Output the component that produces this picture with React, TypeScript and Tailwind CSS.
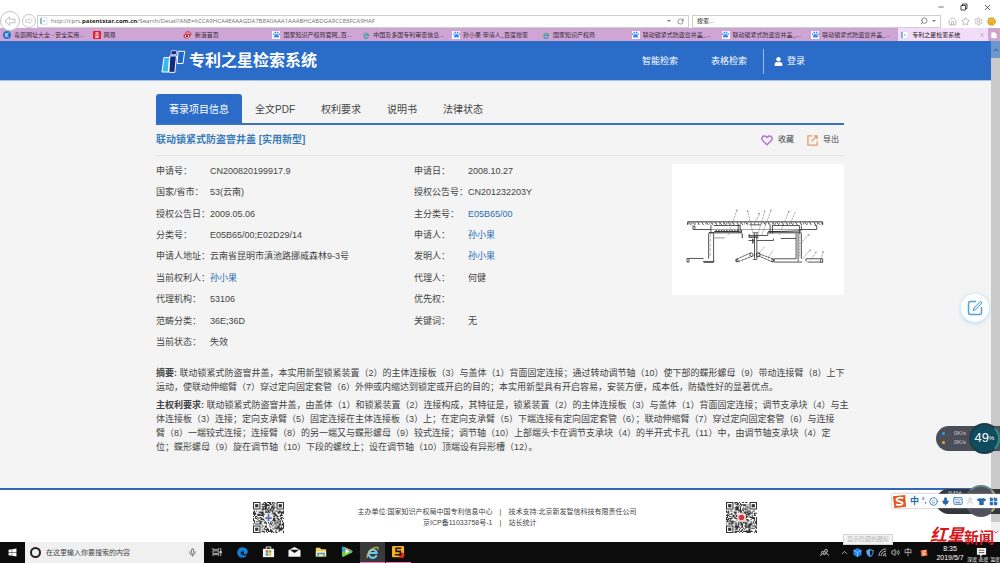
import type { ReactNode } from "react";
import {
  ChevronDown,
  ChevronUp,
  Home,
  Keyboard,
  LayoutGrid,
  Mic,
  Minus,
  RotateCw,
  Search,
  Settings,
  Smile,
  Star,
  User,
  Volume2,
  X,
} from "lucide-react";
import { FaEdge, FaPaw, FaShieldAlt, FaTshirt, FaUser, FaWindows } from "react-icons/fa";

const browserTabs = [
  { icon: "k", title: "毒霸网址大全 - 安全实用..." },
  { icon: "netease", title: "网易" },
  { icon: "sina", title: "新浪首页" },
  { icon: "baidu", title: "国家知识产权局官网_百..." },
  { icon: "ie", title: "中国及多国专利审查信息..." },
  { icon: "baidu", title: "孙小果 申请人_百度搜索" },
  { icon: "ie", title: "国家知识产权局" },
  { icon: "baidu", title: "联动锁紧式防盗窨井盖_..." },
  { icon: "baidu", title: "联动锁紧式防盗窨井盖_..." },
  { icon: "baidu", title: "联动锁紧式防盗窨井盖_..." },
];

const detailTabs = ["著录项目信息", "全文PDF", "权利要求", "说明书", "法律状态"];

interface Field {
  label: string;
  value: string;
  link?: boolean;
}

const leftFields: Field[] = [
  { label: "申请号：", value: "CN200820199917.9" },
  { label: "国家/省市：", value: "53(云南)" },
  { label: "授权公告日：", value: "2009.05.06" },
  { label: "分类号：", value: "E05B65/00;E02D29/14" },
  { label: "申请人地址：", value: "云南省昆明市滇池路挪威森林9-3号" },
  { label: "当前权利人：", value: "孙小果", link: true },
  { label: "代理机构：", value: "53106" },
  { label: "范畴分类：", value: "36E;36D" },
  { label: "当前状态：", value: "失效" },
];

const rightFields: Field[] = [
  { label: "申请日：", value: "2008.10.27" },
  { label: "授权公告号：", value: "CN201232203Y" },
  { label: "主分类号：", value: "E05B65/00", link: true },
  { label: "申请人：", value: "孙小果", link: true },
  { label: "发明人：", value: "孙小果", link: true },
  { label: "代理人：", value: "何健" },
  { label: "优先权：", value: "" },
  { label: "关键词：", value: "无" },
];

function IeIcon({ className, color }: { className: string; color: string }) {
  return (
    <svg viewBox="0 0 16 16" className={className} fill="none">
      <path d="M13 11.2A5 5 0 1 1 13.200 8.600H4.500" stroke={color} strokeWidth="2.600" />
      <path d="M2 14.500C0 13 3 7 8 3.500c3.500-2.300 6.500-2.600 6.800-1 .1.600-.1 1.300-.5 2" stroke="#e9bd3c" strokeWidth="1.400" />
    </svg>
  );
}

function TabIcon({ name }: { name: string }) {
  if (name === "baidu") {
    return (
      <span className="flex size-2 shrink-0 items-center justify-center bg-white text-[#3388ff]">
        <FaPaw size={7} />
      </span>
    );
  }
  if (name === "ie") return <IeIcon className="size-2 shrink-0" color="#3f9ac4" />;
  if (name === "sina") {
    return (
      <svg viewBox="0 0 18 16" className="w-[9px] shrink-0">
        <path d="M1 10c0-3 5-6 8-4 4-1 7 1 6 4-1 3-4 5-8 5s-6-2-6-5z" fill="#d9201f" />
        <ellipse cx="8" cy="10.500" rx="4.500" ry="3" fill="#fff" />
        <circle cx="8" cy="10.500" r="2.200" fill="#111" />
        <path d="M4 4q4-4 9-2 3 1.500 3.500 5" fill="none" stroke="#d9201f" strokeWidth="1.800" />
      </svg>
    );
  }
  if (name === "netease") {
    return (
      <svg viewBox="0 0 8 8" className="size-2 shrink-0">
        <rect width="8" height="8" rx="1" fill="#dd1f2d" />
        <path d="M2 2h4M4 1v3M1.5 4h5M2.5 6.5h3v-1h-3z" stroke="#fff" strokeWidth="0.7" fill="none" />
      </svg>
    );
  }
  return (
    <svg viewBox="0 0 8 8" className="size-2 shrink-0">
      <circle cx="4" cy="4" r="4" fill="#1f74d2" />
      <path d="M3 2v4M5.5 2L3.2 4l2.3 2" stroke="#fff" strokeWidth="0.9" fill="none" />
    </svg>
  );
}

function PageIcon() {
  return (
    <svg viewBox="0 0 8 8" className="size-2 shrink-0">
      <path d="M1 0.5h6v7H1z" fill="#fff" stroke="#c9d6e4" strokeWidth="0.6" />
      <path d="M1 1v6" stroke="#4a90c8" strokeWidth="1.2" />
      <path d="M3 4h2" stroke="#6fb48d" strokeWidth="1" />
    </svg>
  );
}

function NavArrow({ size, flip }: { size: string; flip?: boolean }) {
  return (
    <button
      type="button"
      aria-label={flip ? "前进" : "后退"}
      className={`${size} flex shrink-0 items-center justify-center rounded-full border border-[#c4c4c4] bg-white`}
    >
      <svg viewBox="0 0 12 12" className={flip ? "w-2 rotate-180" : "w-3"}>
        <path d="M1 6l4.5-4.2v2.4H11v3.6H5.5v2.4z" fill="#fff" stroke="#b5b5b5" strokeWidth="0.9" />
      </svg>
    </button>
  );
}

function BrowserChrome() {
  return (
    <header className="bg-white">
      <div className="flex h-[14px] items-center justify-end gap-[15px] pr-[8px] text-[#333]">
        <button type="button" aria-label="最小化"><Minus size={8} /></button>
        <button type="button" aria-label="还原">
          <svg viewBox="0 0 8 8" className="size-2">
            <path d="M1 2.5h4.5V7H1zM2.5 2.5V1H7v4.5H5.5" fill="none" stroke="#333" strokeWidth="0.9" />
          </svg>
        </button>
        <button type="button" aria-label="关闭"><X size={9} /></button>
      </div>
      <div className="flex h-[14px] items-center pr-1">
        <NavArrow size="size-5" />
        <NavArrow size="ml-0.5 size-[14px]" flip />
        <div className="ml-px flex h-[13px] flex-1 items-center border border-[#cfcfcf] pl-0.5 pr-1">
          <PageIcon />
          <div role="textbox" aria-label="地址" className="ml-[3px] flex-1 whitespace-nowrap font-['Open_Sans','Noto_Sans',sans-serif] text-[6px] leading-[10px] text-[#707070]">
            http://cprs.<b className="text-[#222]">patentstar.com.cn</b>/Search/Detail?ANE=6CCA9HCA4EAAAGDA7BEA0AAA1AAABHCABDGA9CCE8FCA9HAF
          </div>
          <span className="border-x-2 border-t-2 border-x-transparent border-t-[#777]" />
          <button type="button" aria-label="刷新" className="ml-1.5 text-[#555]"><RotateCw size={7} /></button>
        </div>
        <label className="ml-[3px] flex h-[13px] w-[249px] items-center border border-[#cfcfcf] px-1">
          <input aria-label="搜索" defaultValue="搜索..." className="min-w-0 flex-1 text-[6px] leading-[10px] text-[#222] outline-none" />
          <Search size={8} className="-scale-x-100 text-[#555]" />
          <span className="ml-1 border-x-2 border-t-2 border-x-transparent border-t-[#777]" />
        </label>
        <div className="ml-[7px] flex items-center gap-[4px] text-[#a8a8a8]">
          <Home size={9} />
          <Star size={9} />
          <Settings size={9} />
          <Smile size={9} fill="#f3c02c" className="text-[#b98b1c]" />
        </div>
      </div>
      <nav className="flex h-[13px] items-stretch bg-[#cfa5d5] text-[6px] leading-[12px] text-[#3a2a3e]">
        {browserTabs.map((tab, i) => (
          <a key={i} href="#" className="flex min-w-0 flex-1 items-center gap-[3px] overflow-hidden whitespace-nowrap pl-[3px]">
            <TabIcon name={tab.icon} />
            {tab.title}
          </a>
        ))}
        <a href="#" className="flex min-w-0 flex-1 items-center gap-[3px] whitespace-nowrap bg-[#f3dcf7] pl-[3px] text-[#1f1722]">
          <PageIcon />
          专利之星检索系统
          <X size={6} className="ml-auto mr-[3px] text-[#a77fae]" />
        </a>
        <button type="button" aria-label="新标签" className="flex w-[12px] items-center justify-center">
          <svg viewBox="0 0 8 8" className="size-2">
            <path d="M1 1h4l2 2v4.5H1z" fill="#fff" stroke="#b9a9bd" strokeWidth="0.6" />
            <path d="M5 0.5h2.5V3z" fill="#e8a13a" />
          </svg>
        </button>
      </nav>
    </header>
  );
}

function Logo() {
  return (
    <svg viewBox="484 146 76 76" className="size-[25px]">
      <path d="M493 172h17l-4 44h-19z" fill="#35b9ef" stroke="#fff" strokeWidth="3" />
      <path d="M511 167h20l-5 50h-18z" fill="#152a7c" stroke="#fff" strokeWidth="3" />
      <path d="M516 151h16l-2 12h-16z" fill="#152a7c" stroke="#fff" strokeWidth="2" />
      <path d="M536 153h20l-5 37h-18z" fill="#1f67c7" stroke="#fff" strokeWidth="3" />
    </svg>
  );
}

function SiteHeader() {
  return (
    <div className="border-b border-[#a9c1e4] bg-[#2a6cc8] pl-[9px] text-white">
      <div className="mx-auto flex h-[39px] w-full max-w-[688px] items-center pt-px">
        <a href="#" className="flex items-center gap-[3px] pl-[5px] text-[16px] font-bold leading-[20px]">
          <Logo />
          专利之星检索系统
        </a>
        <nav className="ml-auto flex items-center pr-[39px] text-[9px] leading-[14px]">
          <a href="#">智能检索</a>
          <a href="#" className="ml-[33px] mr-4">表格检索</a>
          <a href="#" className="flex h-[25px] items-center gap-1 border-l border-[#9dbce8] pl-[10px]">
            <FaUser size={9} />
            登录
          </a>
        </nav>
      </div>
    </div>
  );
}

function FieldList({ fields }: { fields: Field[] }) {
  return (
    <dl className="grid min-h-[193px] auto-rows-fr grid-cols-[54px_1fr] grid-rows-9">
      {fields.map((field) => (
        <div key={field.label} className="col-span-2 grid grid-cols-subgrid items-center">
          <dt className="whitespace-nowrap">{field.label}</dt>
          <dd className="whitespace-nowrap">
            {field.link ? <a href="#" className="text-[#2b6db5]">{field.value}</a> : field.value}
          </dd>
        </div>
      ))}
    </dl>
  );
}

function PatentFigure() {
  return (
    <svg viewBox="36 221 515 394" className="h-[131px] w-[172px] bg-white" fill="none" stroke="#333" strokeWidth="2.5">
      <path d="M82 404v-9h406v9" strokeWidth="3" />
      <path d="M86 396l6 8M98 396l6 8M112 396l5 8M124 396l6 8M138 396l6 8M152 396l5 8M164 396l6 8M178 396l6 8M190 396l6 8M204 396l5 8M216 396l6 8M230 396l5 8M242 396l6 8M256 396l6 8M310 396l6 8M324 396l6 8M338 396l5 8M350 396l6 8M364 396l6 8M378 396l5 8M392 396l6 8M406 396l6 8M420 396l5 8M434 396l6 8M448 396l6 8M462 396l5 8M474 396l6 8" />
      <path d="M84 400h404" strokeWidth="6" stroke="#777" strokeDasharray="2 7 3 9" />
      <path d="M98 406v12h54M160 406h80M268 404h34M338 406h80M418 418h52v-12h-6M98 408h6v8" />
      <path d="M152 418h268" strokeWidth="2" stroke="#777" />
      <path d="M152 404v24M234 404v24M240 404v24M330 404v26M337 404v26M418 406v24M424 406v14" />
      <path d="M146 428h98v-8M162 424h76M246 430v14M324 428h100M324 424h40l60-2" strokeWidth="3" />
      <path d="M166 421h70" strokeDasharray="4 4" />
      <path d="M145 430v76M160 430v86M145 428h16M128 514h34M80 505h50M80 505v11h6v-10M160 517h-30" />
      <path d="M150 432v70" strokeWidth="1.5" strokeDasharray="10 4" stroke="#777" />
      <path d="M162 443h32" strokeWidth="4" stroke="#999" strokeDasharray="5 1" />
      <path d="M265 436h58v-10M267 432v8M265 451h18M290 451h50v-6M283 430v76M290 430v78M278 428h16M278 508h12" />
      <path d="M265 441h30M278 446v14" strokeWidth="4" />
      <path d="M272 488l-44 20 3 8 46-18M294 490l48 18-4 8-46-20" strokeDasharray="8 2" />
      <circle cx="274" cy="494" r="5" /><circle cx="294" cy="494" r="6" />
      <circle cx="230" cy="511" r="4" /><circle cx="339" cy="511" r="4" />
      <path d="M342 506h66M342 516h84M362 445h46M408 430v76M414 430v84M424 430v76" />
      <path d="M419 430v74" strokeDasharray="6 3" strokeWidth="1.5" />
      <path d="M438 506h50v11h-6v-10M438 506v8M442 516h40" />
      <g strokeWidth="1.5" stroke="#666" strokeDasharray="7 2">
        <path d="M230 360l-26 74M262 360l18 76M298 372l-14 24M314 362l-22 74M332 362l-28 76M386 364l-28 70M406 366l-16 34" />
        <path d="M314 470l-20 22M338 482l-14 20M446 434l-26 28M450 480l-22 26M468 486l-16 24M490 484l-6 20" />
      </g>
      <g strokeWidth="3" stroke="#888">
        <path d="M227 360h5M260 364h4M294 370h5M312 362h3M330 360h4M384 364h5M444 434h5M448 480h5M466 486h4M486 486h5" />
      </g>
    </svg>
  );
}

function Lines({ title, lines }: { title: string; lines: string[] }) {
  return (
    <p className="whitespace-nowrap">
      <b>{title}</b>
      {lines.map((line, i) => (
        <span key={line}>
          {i > 0 && <br />}
          {line}
        </span>
      ))}
    </p>
  );
}

function Detail() {
  return (
    <main className="flex-1 bg-[#f4f4f4] pl-[9px] pt-[13px] text-[9px] leading-[14px] text-[#444]">
      <div className="mx-auto w-full max-w-[688px]">
        <div role="tablist" className="flex border-b-2 border-[#3a72bd] text-[10px]">
          {detailTabs.map((tab, i) => (
            <button
              key={tab}
              type="button"
              role="tab"
              aria-selected={i === 0}
              className={
                i === 0
                  ? "h-[29px] rounded-t-[3px] bg-[#2a6cc8] px-[13px] pt-0.5 text-white"
                  : "h-[29px] px-[13px] pt-0.5"
              }
            >
              {tab}
            </button>
          ))}
        </div>
        <div className="flex h-[31px] items-center border-b border-[#e2e2e2]">
          <h1 className="text-[10px] font-bold text-[#3a7cb8]">联动锁紧式防盗窨井盖 [实用新型]</h1>
          <button type="button" className="ml-auto flex items-center gap-[5px] text-[8px]">
            <svg viewBox="0 0 12 11" className="w-3">
              <path d="M6 9.8L1.6 5.4a2.6 2.6 0 0 1 0-3.7 2.6 2.6 0 0 1 3.7 0L6 2.4l.7-.7a2.6 2.6 0 0 1 3.7 0 2.6 2.6 0 0 1 0 3.7z" fill="none" stroke="#b66fd6" strokeWidth="1.4" />
            </svg>
            收藏
          </button>
          <button type="button" className="ml-[13px] mr-[5px] flex items-center gap-[5px] text-[8px]">
            <svg viewBox="0 0 12 12" className="w-[11px]" fill="none" stroke="#e39a6c" strokeWidth="1.4">
              <path d="M5.5 1H1v10h10V7M5 7l5.5-5.5M7.5 1H11v3.5" />
            </svg>
            导出
          </button>
        </div>
        <div className="mt-1 grid grid-cols-[258px_1fr_172px]">
          <FieldList fields={leftFields} />
          <FieldList fields={rightFields} />
          <div className="pt-1">
            <PatentFigure />
          </div>
        </div>
        <div className="mt-[13px] flex flex-col gap-1">
          <Lines
            title="摘要: "
            lines={[
              "联动锁紧式防盗窨井盖，本实用新型锁紧装置（2）的主体连接板（3）与盖体（1）背面固定连接；通过转动调节轴（10）使下部的蝶形螺母（9）带动连接臂（8）上下",
              "运动，使联动伸缩臂（7）穿过定向固定套管（6）外伸或内缩达到锁定或开启的目的；本实用新型具有开启容易，安装方便，成本低，防撬性好的显著优点。",
            ]}
          />
          <Lines
            title="主权利要求: "
            lines={[
              "联动锁紧式防盗窨井盖，由盖体（1）和锁紧装置（2）连接构成，其特征是，锁紧装置（2）的主体连接板（3）与盖体（1）背面固定连接；调节支承块（4）与主",
              "体连接板（3）连接；定向支承臂（5）固定连接在主体连接板（3）上；在定向支承臂（5）下端连接有定向固定套管（6）；联动伸缩臂（7）穿过定向固定套管（6）与连接",
              "臂（8）一端铰式连接；连接臂（8）的另一端又与蝶形螺母（9）铰式连接；调节轴（10）上部端头卡在调节支承块（4）的半开式卡孔（11）中，由调节轴支承块（4）定",
              "位；蝶形螺母（9）旋在调节轴（10）下段的螺纹上；设在调节轴（10）顶端设有异形槽（12）。",
            ]}
          />
        </div>
      </div>
    </main>
  );
}

const QR = 29;

function isFinder(x: number, y: number) {
  return (x < 8 && y < 8) || (x >= QR - 8 && y < 8) || (x < 8 && y >= QR - 8);
}

function QrCode({ seed, children }: { seed: number; children: ReactNode }) {
  let state = seed;
  let path = "";
  for (let y = 0; y < QR; y++) {
    for (let x = 0; x < QR; x++) {
      state = (state * 1103515245 + 12345) % 2147483648;
      if (!isFinder(x, y) && state / 2147483648 > 0.46) path += `M${x} ${y}h1v1h-1z`;
    }
  }
  return (
    <svg viewBox={`0 0 ${QR} ${QR}`} className="size-[31px] shrink-0">
      <path d={path} fill="#333" />
      {[[0, 0], [QR - 7, 0], [0, QR - 7]].map(([x, y]) => (
        <g key={`${x}-${y}`} fill="#333">
          <path d={`M${x + 0.5} ${y + 0.5}h6v6h-6z`} fill="none" stroke="#333" />
          <rect x={x + 2} y={y + 2} width="3" height="3" />
        </g>
      ))}
      {children}
    </svg>
  );
}

function SiteFooter() {
  return (
    <footer className="border-t-2 border-[#3465b8] bg-white pl-[18px]">
      <div className="mx-auto flex h-[52px] w-full max-w-[504px] items-center justify-between pt-0.5 text-[7px] leading-[11px] text-[#444]">
        <QrCode seed={71}>
          <circle cx="14.5" cy="14.5" r="4.5" fill="#e8eaf4" />
          <path d="M14.5 11v7M11.5 15h6" stroke="#5a6fae" strokeWidth="1.6" />
        </QrCode>
        <div className="mr-2 grid grid-cols-[1fr_16px_1fr] whitespace-nowrap text-center">
          <span className="text-right">主办单位:国家知识产权局中国专利信息中心</span>
          <span>|</span>
          <span className="text-left">技术支持:北京新发智信科技有限责任公司</span>
          <span className="text-right">京ICP备11033758号-1</span>
          <span>|</span>
          <a href="#" className="text-left">站长统计</a>
        </div>
        <QrCode seed={905}>
          <rect x="10.5" y="10.5" width="8" height="8" rx="1.5" fill="#f3d9d9" />
          <circle cx="14.5" cy="14.5" r="2.6" fill="#d8323c" />
        </QrCode>
      </div>
    </footer>
  );
}

function Scrollbar() {
  return (
    <div className="flex w-[9px] shrink-0 flex-col bg-[#f0f0f0]">
      <div className="flex h-[17px] items-center justify-center bg-[#6e97cd] text-[#1f3c66]"><ChevronUp size={8} /></div>
      <div className="flex-1 bg-[#c9c9c9]" />
      <div className="flex h-[20px] items-center justify-center text-[#555]"><ChevronDown size={8} /></div>
    </div>
  );
}

function SogouMark({ className }: { className: string }) {
  return (
    <svg viewBox="0 0 16 16" className={className}>
      <path d="M1 2.5L14 1l1 12.5L2.5 15z" fill="#e8551f" />
      <path d="M12 4.5C9 3.4 4.8 4 4.8 6.2c0 2.3 6.4 1.3 6.4 3.6 0 2-4 2.3-7 1.2" fill="none" stroke="#fff" strokeWidth="2" />
    </svg>
  );
}

function FloatingWidgets() {
  return (
    <>
      <button type="button" aria-label="反馈" className="absolute right-[11px] top-[294px] flex size-7 items-center justify-center rounded-full bg-white shadow-[0_1px_5px_#a9d8f0]">
        <svg viewBox="0 0 16 16" className="size-4" fill="none" stroke="#4f9fd8" strokeWidth="1.5">
          <path d="M9 1.5H3.5a2 2 0 0 0-2 2v9a2 2 0 0 0 2 2h9a2 2 0 0 0 2-2V7" />
          <path d="M13.6 1.2l1.6 1.4-6.4 7-2.6 1 .7-2.6z" strokeWidth="1" fill="#d9eefb" />
        </svg>
      </button>

      <div className="absolute right-0 top-[422px] flex h-8 w-16 items-center">
        <div className="h-[25px] w-full rounded-l-full bg-[#4b4e59] pl-[6px] pt-[3px] text-[6px] leading-[9px] text-[#c8cad0]">
          <p className="flex items-center gap-[9px]"><i className="size-[3px] rounded-full bg-[#23a5e6]" />0K/s</p>
          <p className="flex items-center gap-[9px]"><i className="size-[3px] rounded-full bg-[#f2a51e]" />0K/s</p>
        </div>
        <div className="absolute right-0 flex size-[31px] items-center justify-center rounded-full border-2 border-[#1d3d4b] border-r-[#2f8f86] bg-[#0f4c5e] text-white">
          <span className="text-[13px] leading-[16px]">49</span>
          <span className="text-[6px] leading-[8px]">%</span>
        </div>
      </div>

      <div className="absolute right-0 top-[485px] flex h-8 w-16 items-center">
        <div className="h-[25px] w-full rounded-l-full bg-[#33363f] pl-[12px] text-[7px] leading-[9px] text-[#dcdde1]">94%</div>
        <div className="absolute right-[3px] size-8 rounded-full border-2 border-[#55565f] border-r-[#a9b96c] border-t-[#5f8783] bg-[#50515c]" />
      </div>
      <div className="absolute right-0 top-[494px] flex h-[14px] w-[108px] items-center justify-between bg-[#fdfdfd] pr-[2px] text-[#2468b0] shadow-[0_0_2px_#999]">
        <SogouMark className="size-[15px]" />
        <span className="text-[9px] font-bold leading-[12px]">中</span>
        <span className="text-[7px] font-bold leading-[8px]">°,</span>
        <Smile size={9} />
        <Mic size={9} fill="#2468b0" />
        <Keyboard size={10} />
        <User size={8} className="text-[#b4bac2]" />
        <FaTshirt size={9} />
        <LayoutGrid size={9} fill="#2468b0" />
      </div>
    </>
  );
}

function TaskItem({ label, state, children }: { label: string; state?: "active" | "open"; children: ReactNode }) {
  const look =
    state === "active"
      ? "border-[#e879b8] bg-[#3a3a3a]"
      : state === "open"
        ? "border-[#e879b8]"
        : "border-transparent";
  return (
    <button type="button" aria-label={label} className={`flex w-[25px] items-center justify-center border-b ${look}`}>
      {children}
    </button>
  );
}

function Taskbar() {
  return (
    <div className="relative flex h-[21px] items-stretch bg-[#0c0c0c] text-[#ddd]">
      <button type="button" aria-label="开始" className="flex w-[25px] items-center justify-center text-white">
        <FaWindows size={9} />
      </button>
      <label className="flex w-[179px] items-center bg-[#f0f0f0] px-[5px] text-[#444]">
        <span className="size-[11px] shrink-0 rounded-full border-2 border-[#222]" />
        <input aria-label="搜索" defaultValue="在这里输入你要搜索的内容" className="ml-[5px] min-w-0 flex-1 text-[7px] leading-[12px] outline-none" />
        <Mic size={9} className="mr-0.5 text-[#555]" />
      </label>
      <div className="flex gap-px">
        <TaskItem label="任务视图">
          <svg viewBox="0 0 12 10" className="w-[10px]" fill="none" stroke="#ccc" strokeWidth="1">
            <path d="M1 0v2h7V0M1 3.5h7v3H1zM1 10V8h7v2M10.5 0v10M9.5 4h2v2h-2z" />
          </svg>
        </TaskItem>
        <TaskItem label="Edge"><FaEdge size={11} className="text-[#1580d8]" /></TaskItem>
        <TaskItem label="应用商店">
          <svg viewBox="0 0 14 13" className="w-[13px]">
            <path d="M4.5 3V1h5v2" fill="none" stroke="#eee" />
            <path d="M1 3h12v9H1z" fill="#f5f5f5" />
            <path d="M4 4.5h2.7v2.7H4z" fill="#e8502e" />
            <path d="M7.3 4.5H10v2.7H7.3z" fill="#7bb62d" />
            <path d="M4 7.8h2.7v2.7H4z" fill="#2a9ee0" />
            <path d="M7.3 7.8H10v2.7H7.3z" fill="#f7b91c" />
          </svg>
        </TaskItem>
        <TaskItem label="邮件">
          <svg viewBox="0 0 14 12" className="w-[13px]">
            <path d="M0.5 4.5L7 1l6.5 3.5v7H.5z" fill="#f5f5f5" />
            <path d="M2 4h10L7 7.5z" fill="#111" />
          </svg>
        </TaskItem>
        <TaskItem label="文件资源管理器">
          <svg viewBox="0 0 14 12" className="w-3">
            <path d="M1 1h5l1 1.5h6V11H1z" fill="#f3cf66" />
            <path d="M1 5h12v6H1z" fill="#fbe7a2" />
            <path d="M3.5 11V7.5h7V11" fill="none" stroke="#3d9fd8" strokeWidth="1.8" />
          </svg>
        </TaskItem>
        <TaskItem label="播放器">
          <svg viewBox="0 0 13 12" className="w-3">
            <path d="M1 1.5Q1 0 3 .8L12 5q1 1 0 2L3 11.3Q1 12 1 10.5z" fill="#27a6dd" />
            <path d="M1.5 6h11q0 .7-.8 1L3 11.3Q1 12 1 10.5z" fill="#7fc63b" />
            <path d="M3 .8L12 5l-6-.5z" fill="#f2a42a" />
            <path d="M5 3.5v5L9 6z" fill="#fff" />
          </svg>
        </TaskItem>
        <TaskItem label="Internet Explorer" state="active"><IeIcon className="size-[13px]" color="#6cc9ee" /></TaskItem>
        <TaskItem label="搜狗" state="open">
          <svg viewBox="0 0 14 13" className="w-[13px]">
            <rect width="13" height="12" rx="1" fill="#f6b31b" />
            <circle cx="10.5" cy="10" r="3" fill="#e0261c" />
            <path d="M10 2.5H4.5v3.3H9v3.7H3" fill="none" stroke="#1a1a1a" strokeWidth="1.7" />
          </svg>
        </TaskItem>
      </div>

      <div className="ml-auto flex items-center gap-[4px] pr-[12px]">
        <svg viewBox="0 0 12 10" className="mr-[7px] w-[9px]" fill="none" stroke="#ddd" strokeWidth="1.1">
          <circle cx="8" cy="2.5" r="2" /><circle cx="3.5" cy="4.5" r="1.5" />
          <path d="M0.5 10q0-3.5 3-3.5T6.5 8Q6 5.5 8 5.5t3.5 3.5" />
        </svg>
        <ChevronUp size={9} />
        <svg viewBox="0 0 10 10" className="w-[9px]">
          <path d="M5 0l4.5 2.5v5L5 10 .5 7.5v-5z" fill="#2685ea" />
          <path d="M5 5l4.5-2.5M5 5v5M5 5L.5 2.500" stroke="#a9d6ff" strokeWidth="0.8" />
        </svg>
        <FaShieldAlt size={8} className="text-[#58a6f5]" />
        <svg viewBox="0 0 10 10" className="w-[9px]" fill="none" stroke="#ccc">
          <path d="M1 9a8 8 0 0 1 8-8M3.5 9A5.5 5.5 0 0 1 9 3.5M6 9a3 3 0 0 1 3-3" /><circle cx="8.5" cy="8.5" r=".5" />
        </svg>
        <Volume2 size={9} />
        <span className="text-[8px] leading-[10px]">中</span>
        <SogouMark className="ml-1 size-[8px]" />
        <time className="ml-1 w-[28px] whitespace-nowrap text-center text-[7px] leading-[9px] text-white">8:35<br />2019/5/7</time>
        <svg viewBox="0 0 12 12" className="ml-2 mr-px w-[11px]">
          <path d="M1 1h10v7.5H7L4.5 11V8.5H1z" fill="#f2f2f2" />
          <path d="M3 3.5h6M3 6h6" stroke="#333" strokeWidth="0.8" />
        </svg>
      </div>

      <div role="tooltip" className="absolute bottom-[18px] right-[107px] border border-[#d6d6d6] bg-[#f3f3f3] px-[3px] text-[6px] leading-[9px] text-[#b5b5b5]">
        显示隐藏的图标
      </div>
      <div className="absolute bottom-[18px] right-[6px] flex items-end font-bold text-[#d9141c]">
        <span className="font-['Liberation_Serif','Noto_Sans_CJK_SC',serif] text-[17px] italic leading-[18px]">红星</span>
        <span className="text-[15px] leading-[14px]">新闻</span>
      </div>
      <p className="absolute bottom-px right-0 whitespace-nowrap text-[5px] leading-[6px] text-white">深度 态度 温度</p>
    </div>
  );
}

export default function App() {
  return (
    <div className="relative flex min-h-screen flex-col overflow-hidden font-['Liberation_Sans','Noto_Sans_CJK_SC',sans-serif]">
      <BrowserChrome />
      <div className="flex flex-1">
        <div className="flex min-w-0 flex-1 flex-col">
          <SiteHeader />
          <Detail />
          <SiteFooter />
        </div>
        <Scrollbar />
      </div>
      <FloatingWidgets />
      <Taskbar />
    </div>
  );
}
